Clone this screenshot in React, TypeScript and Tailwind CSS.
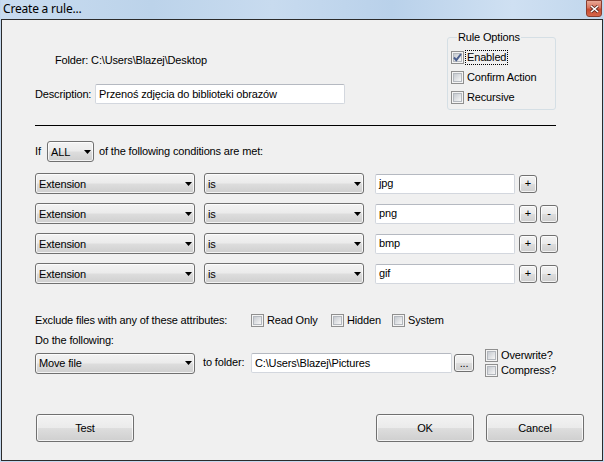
import React from "react";

// win7 style button / combo face
const face =
  "bg-[linear-gradient(#f3f3f3_0%,#ebebeb_48%,#dddddd_52%,#cfcfcf_100%)]";

function Arrow() {
  return (
    <svg width="7" height="4" viewBox="0 0 7 4" className="shrink-0">
      <path d="M0 0h7L3.5 4z" fill="#000" />
    </svg>
  );
}

function Combo({ label, className = "" }: { label: string; className?: string }) {
  return (
    <div
      className={`flex h-[21px] shrink-0 items-center justify-between rounded-[3px] border border-[#707070] pl-[3px] pr-[2px] shadow-[inset_0_0_0_1px_rgba(255,255,255,0.75)] ${face} ${className}`}
    >
      <span className="pt-px">{label}</span>
      <Arrow />
    </div>
  );
}

function TextBox({ value, className = "" }: { value: string; className?: string }) {
  return (
    <div
      className={`flex h-[20px] shrink-0 items-center rounded-[2px] border border-[#d3d7de] border-t-[#b5b9c1] bg-white px-[3px] ${className}`}
    >
      {value}
    </div>
  );
}

function Btn({ label, className = "" }: { label: string; className?: string }) {
  return (
    <div
      className={`flex shrink-0 items-center justify-center rounded-[3px] border border-[#707070] shadow-[inset_0_0_0_1px_rgba(255,255,255,0.75)] ${face} ${className}`}
    >
      {label}
    </div>
  );
}

function Check({ checked }: { checked?: boolean }) {
  return (
    <div className="relative h-[13px] w-[13px] shrink-0 border border-[#8f8f8f] bg-[#f4f4f4] p-px">
      <div className="h-full w-full border border-[#b4b8be] bg-[linear-gradient(135deg,#c6cad0,#f7f7f7)]" />
      {checked && (
        <svg className="absolute left-0 top-0" width="11" height="11" viewBox="0 0 11 11">
          <path d="M2 5.5l2.3 2.6L9 2" fill="none" stroke="#4b5f8f" strokeWidth="2" />
        </svg>
      )}
    </div>
  );
}

function CheckItem({
  label,
  checked,
  focused,
  className = "",
}: {
  label: string;
  checked?: boolean;
  focused?: boolean;
  className?: string;
}) {
  return (
    <div className={`flex h-[13px] items-center ${className}`}>
      <Check checked={checked} />
      <span
        className={`ml-[2px] px-px leading-[13px] ${focused ? "outline outline-1 outline-dotted outline-black" : ""}`}
      >
        {label}
      </span>
    </div>
  );
}

function ConditionRow({ value, minus }: { value: string; minus: boolean }) {
  return (
    <div className="flex h-[21px] items-center">
      <Combo label="Extension" className="w-[160px]" />
      <Combo label="is" className="ml-[9px] w-[160px]" />
      <TextBox value={value} className="ml-[11px] w-[140px]" />
      <Btn label="+" className="ml-[4px] h-[18px] w-[18px]" />
      {minus && <Btn label="-" className="ml-[3px] h-[18px] w-[18px]" />}
    </div>
  );
}

export default function App() {
  const conditions = ["jpg", "png", "bmp", "gif"];

  return (
    <div className="flex h-[462px] w-[604px] flex-col bg-[#c4d8ee] px-px pb-px font-['Liberation_Sans',Arial,sans-serif] text-[11px] leading-[13px] tracking-[-0.15px] text-black">
      {/* title bar */}
      <div className="flex h-[19px] shrink-0 items-start justify-between bg-[linear-gradient(90deg,#c9dcf0_0%,#bcd3ea_25%,#c8dbef_45%,#b9d1ea_65%,#cfe0f2_85%,#c0d6ec_100%)]">
        <span className="pl-[2px] pt-[1px] font-['Noto_Sans',sans-serif] text-[12px] leading-[16px] tracking-[-0.2px] text-black">
          Create a rule...
        </span>
        <div className="mr-px flex h-[17px] w-[16px] items-center justify-center rounded-b-[3px] border border-[#8a3e2f] bg-[linear-gradient(#e8a896_0%,#d9735c_45%,#c74a2f_55%,#d5664a_100%)]">
          <svg width="9" height="8" viewBox="0 0 9 8">
            <path d="M1 1l7 6M8 1L1 7" stroke="#5a2a20" strokeWidth="3" />
            <path d="M1 1l7 6M8 1L1 7" stroke="#fff" strokeWidth="1.6" />
          </svg>
        </div>
      </div>

      {/* dialog body */}
      <div className="flex flex-1 flex-col border border-[#2b2b2b] bg-[#f0f0f0] pl-[33px]">
        <div className="flex">
          <div className="flex w-[412px] flex-col pt-[34px]">
            <div className="ml-[20px]">Folder: C:\Users\Blazej\Desktop</div>
            <div className="mt-[17px] flex items-center">
              <span className="w-[60px]">Description:</span>
              <TextBox value="Przenoś zdjęcia do biblioteki obrazów" className="w-[250px]" />
            </div>
          </div>

          <fieldset className="mt-[11px] h-[79px] w-[109px] rounded-[3px] border border-[#d5dfe5] pl-[3px] pt-[7px]">
            <legend className="ml-[6px] px-px leading-[13px]">Rule Options</legend>
            <div className="flex flex-col gap-[7px]">
              <CheckItem label="Enabled" checked focused />
              <CheckItem label="Confirm Action" />
              <CheckItem label="Recursive" />
            </div>
          </fieldset>
        </div>

        <div className="mt-[15px] h-px w-[521px] bg-black" />

        <div className="mt-[15px] flex h-[21px] items-center">
          <span className="w-[12px]">If</span>
          <Combo label="ALL" className="w-[47px]" />
          <span className="ml-[5px]">of the following conditions are met:</span>
        </div>

        <div className="mt-[11px] flex flex-col gap-[9px]">
          {conditions.map((c, i) => (
            <ConditionRow key={c} value={c} minus={i > 0} />
          ))}
        </div>

        <div className="mt-[30px] flex h-[13px] items-center">
          <span className="w-[216px]">Exclude files with any of these attributes:</span>
          <CheckItem label="Read Only" className="w-[80px]" />
          <CheckItem label="Hidden" className="w-[61px]" />
          <CheckItem label="System" />
        </div>

        <div className="mt-[7px]">Do the following:</div>

        <div className="mt-[2px] flex h-[28px] items-center">
          <Combo label="Move file" className="w-[160px]" />
          <span className="ml-[8px] w-[48px] pb-[2px]">to folder:</span>
          <TextBox value="C:\Users\Blazej\Pictures" className="w-[201px]" />
          <Btn label="..." className="ml-[2px] h-[18px] w-[20px] items-end pb-px" />
          <div className="ml-[11px] flex flex-col gap-[2px]">
            <CheckItem label="Overwrite?" />
            <CheckItem label="Compress?" />
          </div>
        </div>

        <div className="mt-[37px] flex pr-[18px]">
          <Btn label="Test" className="ml-px h-[28px] w-[98px]" />
          <Btn label="OK" className="ml-auto h-[28px] w-[98px]" />
          <Btn label="Cancel" className="ml-[12px] h-[28px] w-[98px]" />
        </div>
      </div>
    </div>
  );
}
